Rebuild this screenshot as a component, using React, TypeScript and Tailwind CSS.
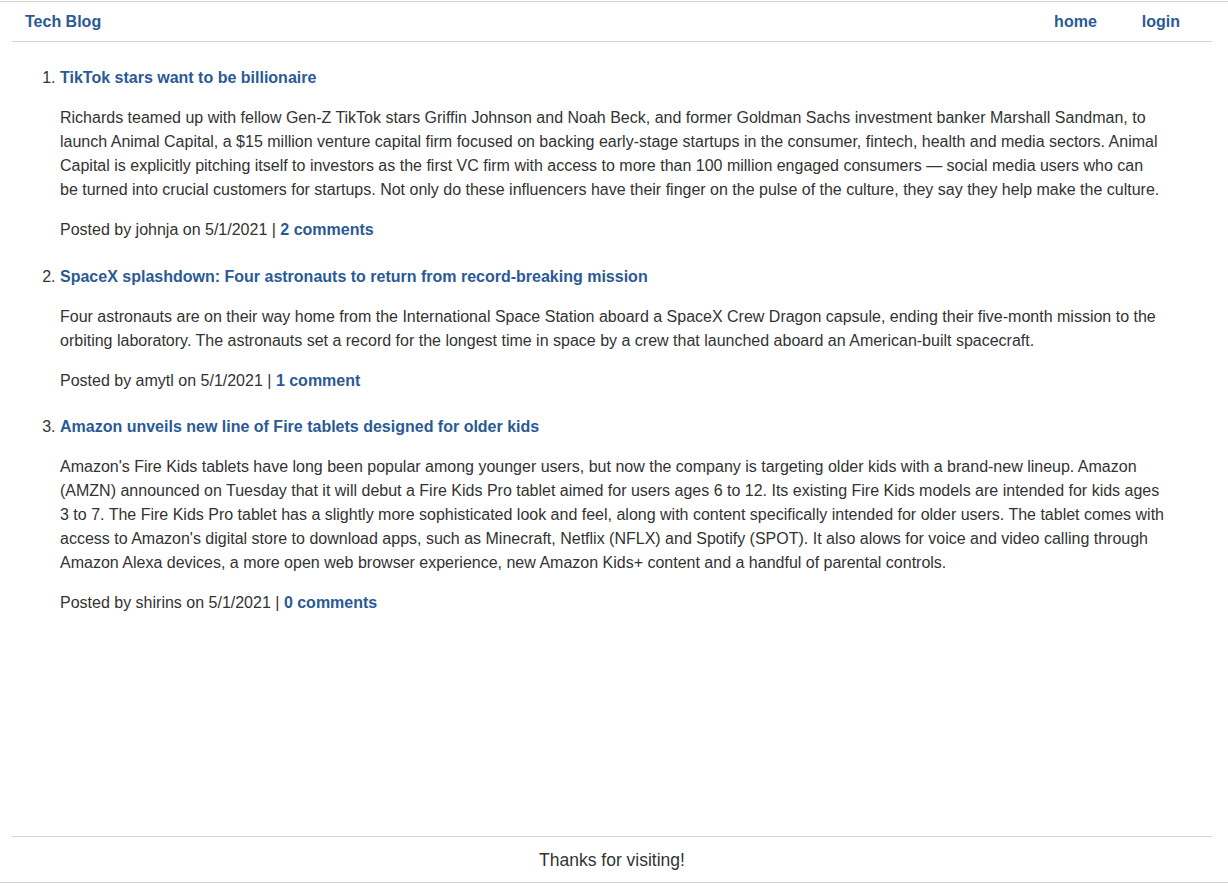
import React from "react";

const posts = [
  {
    title: "TikTok stars want to be billionaire",
    body: "Richards teamed up with fellow Gen-Z TikTok stars Griffin Johnson and Noah Beck, and former Goldman Sachs investment banker Marshall Sandman, to launch Animal Capital, a $15 million venture capital firm focused on backing early-stage startups in the consumer, fintech, health and media sectors. Animal Capital is explicitly pitching itself to investors as the first VC firm with access to more than 100 million engaged consumers — social media users who can be turned into crucial customers for startups. Not only do these influencers have their finger on the pulse of the culture, they say they help make the culture.",
    user: "johnja",
    date: "5/1/2021",
    comments: "2 comments",
  },
  {
    title: "SpaceX splashdown: Four astronauts to return from record-breaking mission",
    body: "Four astronauts are on their way home from the International Space Station aboard a SpaceX Crew Dragon capsule, ending their five-month mission to the orbiting laboratory. The astronauts set a record for the longest time in space by a crew that launched aboard an American-built spacecraft.",
    user: "amytl",
    date: "5/1/2021",
    comments: "1 comment",
  },
  {
    title: "Amazon unveils new line of Fire tablets designed for older kids",
    body: "Amazon's Fire Kids tablets have long been popular among younger users, but now the company is targeting older kids with a brand-new lineup. Amazon (AMZN) announced on Tuesday that it will debut a Fire Kids Pro tablet aimed for users ages 6 to 12. Its existing Fire Kids models are intended for kids ages 3 to 7. The Fire Kids Pro tablet has a slightly more sophisticated look and feel, along with content specifically intended for older users. The tablet comes with access to Amazon's digital store to download apps, such as Minecraft, Netflix (NFLX) and Spotify (SPOT). It also alows for voice and video calling through Amazon Alexa devices, a more open web browser experience, new Amazon Kids+ content and a handful of parental controls.",
    user: "shirins",
    date: "5/1/2021",
    comments: "0 comments",
  },
];

export default function App() {
  return (
    <div
      className="min-h-screen flex flex-col bg-white text-[#333333] text-[16px] leading-[24px]"
      style={{ fontFamily: '"Liberation Sans", Arial, sans-serif' }}
    >
      <div className="border-t border-[#d4d4d4] mt-px" />
      <header className="mx-[12px] w-[1200px] h-[40px] border-b border-[#d4d4d4] flex items-center justify-between">
        <a className="font-bold text-[#2a5a96] ml-[13px]">Tech Blog</a>
        <nav className="flex items-center gap-[45px] mr-[32px]">
          <a className="font-bold text-[#2a5a96] ml-px">home</a>
          <a className="font-bold text-[#2a5a96]">login</a>
        </nav>
      </header>
      <main className="mx-[12px] w-[1200px] pt-[24px]">
        <ol className="list-decimal pl-[48px] pr-[47.5px] marker:text-[#333333]">
          {posts.map((p, i) => (
            <li key={i} className="mb-[22.5px]">
              <a className="font-bold text-[#2a5a96]">{p.title}</a>
              <p className="mt-[16px]">{p.body}</p>
              <p className="mt-[16px]">
                Posted by {p.user} on {p.date} |{" "}
                <a className="font-bold text-[#2a5a96]">{p.comments}</a>
              </p>
            </li>
          ))}
        </ol>
      </main>
      <footer className="mt-auto mb-[4px]">
        <div className="mx-[12px] w-[1200px] border-t border-[#d4d4d4] h-[46px] flex items-center justify-center text-[17.5px]">
          Thanks for visiting!
        </div>
        <div className="border-t border-[#d4d4d4]" />
      </footer>
    </div>
  );
}
